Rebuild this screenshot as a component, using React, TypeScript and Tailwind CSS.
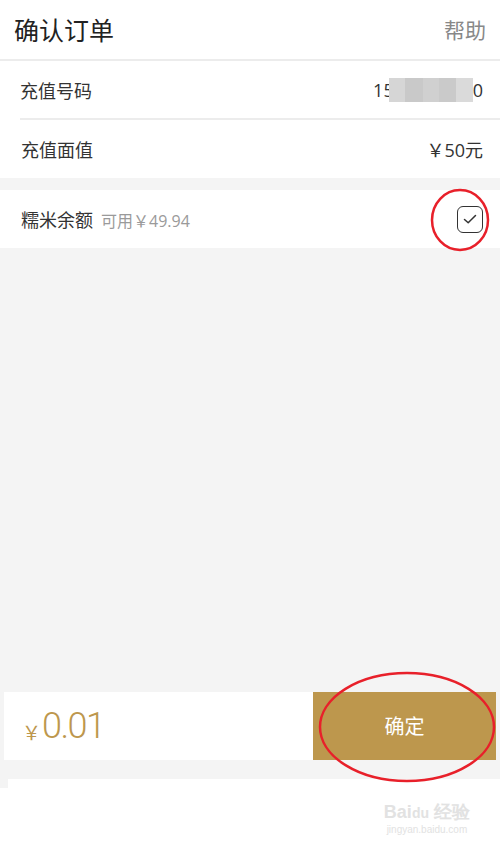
export default function App() {
  return (
    <div
      className="relative flex h-[855px] w-[500px] flex-col overflow-hidden bg-[#f4f4f4] text-[#333]"
      style={{ fontFamily: '"Noto Sans CJK SC", "Noto Sans", sans-serif' }}
    >
      {/* header */}
      <div className="flex h-[61px] shrink-0 items-center justify-between border-b-2 border-[#ececec] bg-white pl-[14px] pr-[14px]">
        <span className="text-[25px] leading-none text-[#222]">确认订单</span>
        <span className="text-[21px] leading-none text-[#888]">帮助</span>
      </div>

      <div className="bg-white">
        <div className="ml-[20px] flex h-[59px] items-center justify-between border-b-2 border-[#ececec] pr-[17px]">
          <span className="text-[18px] leading-none">充值号码</span>
          <span className="flex items-center text-[18px] leading-none" style={{ fontFamily: '"Open Sans", sans-serif' }}>
            <span>15</span>
            <span className="relative -ml-[5px] flex h-[24px] w-[84px]">
              <span className="w-[16px] bg-[#d6d6d6]" />
              <span className="w-[18px] bg-[#c9c9c9]" />
              <span className="w-[16px] bg-[#d0d0d0]" />
              <span className="w-[17px] bg-[#cacaca]" />
              <span className="w-[17px] bg-[#dadada]" />
            </span>
            <span>0</span>
          </span>
        </div>
        <div className="flex h-[58px] items-center justify-between pl-[21px] pr-[17px]">
          <span className="text-[18px] leading-none">充值面值</span>
          <span className="text-[18px] leading-none">
            ￥<span style={{ fontFamily: '"Open Sans", sans-serif' }}>50</span>元
          </span>
        </div>
      </div>

      <div className="mt-[12px] flex h-[58px] items-center justify-between bg-white pl-[21px] pr-[17px]">
        <div className="flex items-baseline gap-[8px]">
          <span className="text-[18px] leading-none">糯米余额</span>
          <span className="text-[16px] leading-none text-[#9a9a9a]">
            可用￥<span style={{ fontFamily: '"Open Sans", sans-serif' }}>49.94</span>
          </span>
        </div>
        <div className="flex h-[27px] w-[26px] items-center justify-center rounded-[6px] border-[1.5px] border-[#333]">
          <svg width="16" height="12" viewBox="0 0 16 12" fill="none">
            <path d="M2.5 6.5 L6.2 9.8 L13.5 2.5" stroke="#333" strokeWidth="1.5" strokeLinecap="round" strokeLinejoin="round" />
          </svg>
        </div>
      </div>

      <div className="flex-1" />

      {/* bottom bar */}
      <div className="mx-[4px] flex h-[68px] shrink-0">
        <div className="flex flex-1 items-center bg-white pl-[18px]">
          <span className="mt-[10px] text-[19px] leading-none text-[#bd974d]">￥</span>
          <span className="ml-[1px] text-[36px] font-light leading-none tracking-[-1.5px] text-[#bd974d]" style={{ fontFamily: 'Roboto, sans-serif' }}>0.01</span>
        </div>
        <div className="flex w-[183px] items-center justify-center bg-[#bd974d] text-[20px] text-white">确定</div>
      </div>

      <div className="mt-[19px] flex h-[76px] shrink-0 flex-col">
        <div className="ml-[8px] h-[9px] bg-white" />
        <div className="relative flex-1 bg-white">
          <div className="absolute right-[30px] top-[15px] flex flex-col items-center leading-none text-[#e2e2e2]">
            <span className="text-[18px] font-bold" style={{ fontFamily: '"Liberation Sans", sans-serif' }}>
              Bai<span className="text-[14px]">du</span> 经验
            </span>
            <span className="mt-[4px] text-[10px]" style={{ fontFamily: '"Liberation Sans", sans-serif' }}>jingyan.baidu.com</span>
          </div>
        </div>
      </div>

      {/* red annotation circles */}
      <svg className="pointer-events-none absolute left-0 top-0" width="500" height="855">
        <ellipse cx="460" cy="220" rx="28" ry="30" fill="none" stroke="#e8202a" strokeWidth="2.5" />
        <ellipse cx="407" cy="727" rx="87" ry="54" fill="none" stroke="#e8202a" strokeWidth="2.5" />
      </svg>
    </div>
  );
}
